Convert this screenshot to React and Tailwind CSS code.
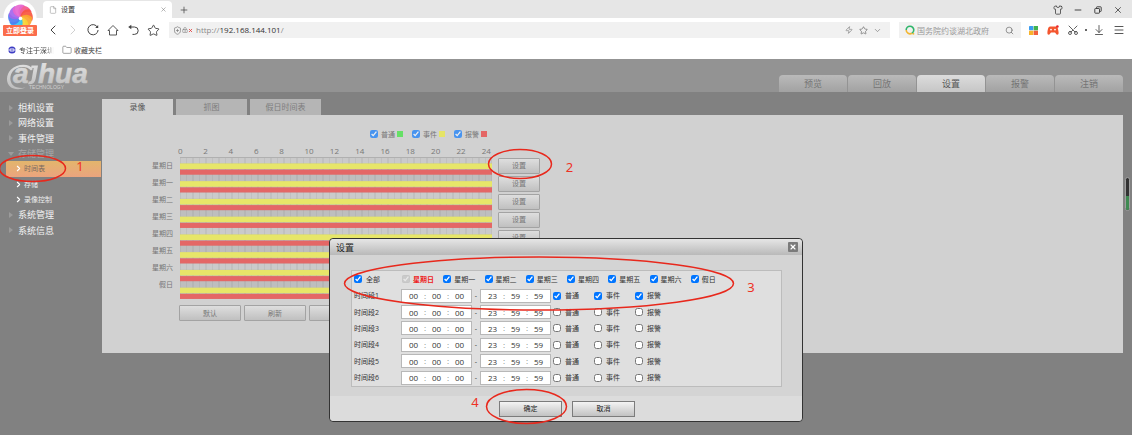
import React, { useState } from 'react';
import {
  ChevronLeft, ChevronRight, ChevronDown, Star, Zap, Search, Scissors,
  ArrowDownToLine, Menu, Shirt, Minus, X, Plus, Folder, File, ShieldPlus, LockKeyhole,
} from 'lucide-react';

const WEEK = ['星期日', '星期一', '星期二', '星期三', '星期四', '星期五', '星期六', '假日'];
const HOURS = [0, 2, 4, 6, 8, 10, 12, 14, 16, 18, 20, 22, 24];
const KINDS = ['普通', '事件', '报警'];
const PERIODS = [1, 2, 3, 4, 5, 6];

function IconButton({ label, className = 'w-5', children }) {
  return (
    <button type="button" aria-label={label} className={`flex h-4 shrink-0 items-center justify-center ${className}`}>
      {children}
    </button>
  );
}

function PinwheelLogo() {
  const petals = ['#f2568c', '#f9563f', '#fba52c', '#f9d234', '#35c3f5', '#4d7cf0', '#a266ee', '#e767d0'];
  return (
    <svg viewBox="0 0 34 36" className="h-9 w-[34px]" aria-hidden="true">
      <circle cx="17" cy="17" r="16.500" fill="#fff" />
      {petals.map((c, i) => (
        <path key={c} d="M17.500 17 C14.500 13.500 14.500 8.500 18 5.400 C23 5.200 27.500 8 28.600 12 C24 10.800 19.500 12.500 17.500 17Z" fill={c} transform={`rotate(${i * 45} 17.500 17)`} opacity="0.92" />
      ))}
      <circle cx="17.500" cy="18.500" r="1.800" fill="#fff" />
    </svg>
  );
}

function BrowserChrome() {
  return (
    <div className="relative bg-white text-[#444]">
      <div className="flex h-[18px] items-end bg-[#e6e6e6] pl-[43px]">
        <div className="flex h-[17px] w-[129px] items-center rounded-t bg-white pl-1.5 pr-1">
          <File size={8} strokeWidth={1.5} className="text-[#888]" />
          <span className="ml-1 flex-1 text-[7px] leading-none text-[#333]">设置</span>
          <IconButton label="关闭标签" className="w-2.5"><X size={7} strokeWidth={1.8} className="text-[#777]" /></IconButton>
        </div>
        <IconButton label="新标签" className="w-6"><Plus size={10} strokeWidth={1.8} /></IconButton>
        <div className="flex-1" />
        <IconButton label="皮肤"><Shirt size={10} strokeWidth={2} /></IconButton>
        <IconButton label="最小化"><Minus size={10} strokeWidth={2.4} /></IconButton>
        <IconButton label="还原">
          <svg viewBox="0 0 8 8" className="size-2" fill="none" stroke="currentColor" strokeWidth="1">
            <rect x="0.800" y="2.500" width="4.700" height="4.700" rx="0.600" />
            <path d="M2.500 2.200V1.400q0-.6.600-.6H6.600q.6 0 .6.600v3.500q0 .6-.6.600H5.800" />
          </svg>
        </IconButton>
        <IconButton label="关闭"><X size={10} strokeWidth={2} /></IconButton>
        <div className="w-1" />
      </div>
      <div className="flex h-6 items-center pl-[43px] pr-[3px]">
        <IconButton label="后退"><ChevronLeft size={16} strokeWidth={1.5} /></IconButton>
        <IconButton label="前进"><ChevronRight size={16} strokeWidth={1.4} className="text-[#ccc]" /></IconButton>
        <IconButton label="刷新页面">
          <svg viewBox="0 0 12 12" className="size-3" fill="none" stroke="currentColor" strokeWidth="1">
            <path d="M10.600 3.500A5.100 5.100 0 1 0 11.100 6" />
            <path d="M11.200 1v3H8.200z" fill="currentColor" stroke="none" />
          </svg>
        </IconButton>
        <IconButton label="主页">
          <svg viewBox="0 0 12 12" className="size-3" fill="none" stroke="currentColor" strokeWidth="0.900">
            <path d="M1 6.500 6 1.500l5 5H9.500V11h-7V6.500z" strokeLinejoin="round" />
          </svg>
        </IconButton>
        <IconButton label="撤销">
          <svg viewBox="0 0 12 12" className="size-3" fill="none" stroke="currentColor" strokeWidth="1">
            <path d="M3 3h4.500a3.700 3.700 0 0 1 0 7.400H5.500" />
            <path d="M1.200 3 4.300.8v4.400z" fill="currentColor" stroke="none" />
          </svg>
        </IconButton>
        <IconButton label="收藏"><Star size={13} strokeWidth={1.7} /></IconButton>
        <div className="ml-1.5 flex h-4 min-w-0 flex-1 items-center bg-[#f1f1f1] pl-1 pr-1.5">
          <ShieldPlus size={9} strokeWidth={1.8} className="text-[#777]" />
          <LockKeyhole size={6} strokeWidth={2.5} className="text-[#888]" />
          <X size={5} strokeWidth={4} className="text-[#e04040]" />
          <a href="http://192.168.144.101/" className="ml-[3px] flex-1 text-[8px] leading-none text-[#8a8a8a]">
            http://<span className="text-[#333]">192.168.144.101</span>/
          </a>
          <IconButton label="极速模式" className="w-3.5"><Zap size={8} strokeWidth={1.8} className="text-[#777]" /></IconButton>
          <IconButton label="收藏此页" className="w-3.5"><Star size={9} strokeWidth={1.8} className="text-[#666]" /></IconButton>
          <IconButton label="展开" className="w-3.5"><ChevronDown size={9} strokeWidth={1.8} className="text-[#777]" /></IconButton>
        </div>
        <div className="ml-[9px] flex h-4 w-[122px] items-center bg-[#f1f1f1] px-1.5">
          <svg viewBox="0 0 10 10" className="size-2.5" fill="none" strokeWidth="1.600" aria-hidden="true">
            <path d="M8.800 5A3.800 3.800 0 0 0 1.200 5" stroke="#2fb56a" />
            <path d="M1.200 5a3.800 3.800 0 0 0 5.700 3.300" stroke="#f2b632" />
            <path d="M8.800 5a3.800 3.800 0 0 1-1.900 3.300" stroke="#37b96d" />
            <path d="M7.600 8.800h1.600" stroke="#f2b632" />
          </svg>
          <input aria-label="搜索" placeholder="国务院约谈湖北政府" className="ml-0.5 h-3 min-w-0 flex-1 bg-transparent text-[8px] leading-none outline-none placeholder:text-[#999]" />
          <IconButton label="搜索按钮" className="w-3"><Search size={9} strokeWidth={1.8} className="text-[#666]" /></IconButton>
        </div>
        <IconButton label="应用" className="ml-0.5 w-5">
          <svg viewBox="0 0 10 10" className="size-[9px]">
            <rect width="4.800" height="4.800" rx="0.800" fill="#3b9cf0" /><rect x="5.200" width="4.800" height="4.800" fill="#41b24f" />
            <rect y="5.200" width="4.800" height="4.800" fill="#f8b32b" /><rect x="5.200" y="5.200" width="4.800" height="4.800" fill="#f2603c" />
          </svg>
        </IconButton>
        <IconButton label="游戏">
          <svg viewBox="0 0 12 11" className="h-[11px] w-3">
            <path d="M3 1.500h6c1.600 0 2.300 3 2.600 5.900.2 2.600-1.800 3-2.800 1L8 7.400H4L3.200 8.400c-1 2-3 1.600-2.800-1C.7 4.500 1.400 1.500 3 1.500z" fill="#f4562f" />
            <circle cx="4" cy="4.600" r="0.900" fill="#fff" /><circle cx="8" cy="4.600" r="0.900" fill="#fff" />
            <circle cx="10.400" cy="1.500" r="1.300" fill="#e8232a" />
          </svg>
        </IconButton>
        <IconButton label="截图"><Scissors size={12} strokeWidth={1.7} className="-rotate-90" /></IconButton>
        <IconButton label="截图选项" className="w-1.5"><span className="size-0.5 rounded-full bg-[#333]" /></IconButton>
        <IconButton label="下载"><ArrowDownToLine size={12} strokeWidth={1.7} /></IconButton>
        <IconButton label="菜单"><Menu size={12} strokeWidth={1.8} /></IconButton>
      </div>
      <div className="flex h-[17px] items-center pb-px pl-2 text-[7px] leading-none text-[#444]">
        <svg viewBox="0 0 8 8" className="size-2" aria-hidden="true">
          <circle cx="4" cy="4" r="3.600" fill="#3d3dc4" />
          <path d="M2.200 2.800h3.600v2.400H2.200zM0 4h8" fill="none" stroke="#fff" strokeWidth="0.700" />
        </svg>
        <a href="#shenzhen" className="ml-[3px] w-[35px] whitespace-nowrap [mask-image:linear-gradient(to_right,black_75%,transparent)]">专注于深圳</a>
        <Folder size={10} strokeWidth={1.6} className="ml-2 text-[#777]" />
        <a href="#bookmarks" className="ml-0.5">收藏夹栏</a>
      </div>
      <button type="button" className="absolute left-[3px] top-0 w-[34px]">
        <PinwheelLogo />
        <span className="absolute left-0 top-[25px] flex h-[11px] w-[34px] items-center justify-center rounded-[1px] bg-[#fb6d4b] text-[7px] font-bold leading-none text-white">立即登录</span>
      </button>
    </div>
  );
}

function DahuaLogo() {
  return (
    <svg viewBox="0 0 90 28" className="ml-[5px] h-7 w-[90px] self-start" role="img" aria-label="dahua technology">
      <defs>
        <linearGradient id="logo" gradientUnits="userSpaceOnUse" x1="0" y1="2" x2="0" y2="24">
          <stop offset="0" stopColor="#dedede" /><stop offset="1" stopColor="#c0c0c0" />
        </linearGradient>
      </defs>
      <path d="M28 6C24 0 12 .5 6 6.500 1 11.500.5 20 5.500 24c3.500 2.600 9 2.800 15 .8-6 .5-10-.2-12.500-2.600C4.500 18.500 4.500 12.500 8 8 12.500 3 21.500 2.500 26 7.500z" fill="url(#logo)" />
      <g fill="url(#logo)" stroke="url(#logo)" strokeWidth="0.500" fontFamily="'Liberation Sans', Arial, sans-serif" fontWeight="700" fontStyle="italic" fontSize="28">
        <text x="8" y="20">a</text>
        <text x="33" y="20">hua</text>
      </g>
      <path d="M26.500 2.500h6.500L30.600 16c-.8 4-3.200 5.800-7.600 5.200l.8-2.600c1.800 0 2.500-.6 2.900-2.400L28.700 5h-2.700z" fill="url(#logo)" />
      <text x="24" y="26" fill="#d0d0d0" fontFamily="'Liberation Sans', Arial, sans-serif" fontSize="5">TECHNOLOGY</text>
    </svg>
  );
}

function SiteHeader() {
  return (
    <header className="flex h-[33px] items-end justify-between bg-[#939393] pr-[9px] pt-1">
      <DahuaLogo />
      <nav className="flex gap-px">
        {['预览', '回放', '设置', '报警', '注销'].map((t) => (
          <a
            key={t}
            href={`#${t}`}
            className={`flex h-[17px] w-[68px] items-center justify-center rounded-t text-[9px] leading-none ${
              t === '设置'
                ? 'bg-linear-to-b from-[#dcdcdc] to-[#c6c6c6] text-[#555]'
                : 'bg-linear-to-b from-[#bababa] to-[#a2a2a2] text-[#757575]'
            }`}
          >
            {t}
          </a>
        ))}
      </nav>
    </header>
  );
}

function Sidebar() {
  const items = [
    { t: '相机设置' }, { t: '网络设置' }, { t: '事件管理' }, { t: '存储管理', open: true },
    { t: '时间表', sub: true, active: true }, { t: '存储', sub: true }, { t: '录像控制', sub: true },
    { t: '系统管理' }, { t: '系统信息' },
  ];
  return (
    <ul className="mt-px grid h-[138px] w-[102px] shrink-0 auto-rows-fr pl-1.5 pr-px leading-none">
      {items.map((it) => (
        <li key={it.t} className="flex">
          {it.sub ? (
            <a
              href={`#${it.t}`}
              className={`flex flex-1 items-center pl-2 text-[7px] ${
                it.active ? 'bg-linear-to-b from-[#e3b56c] to-[#eba47e] text-[#776a60]' : 'text-[#eee]'
              }`}
            >
              <ChevronRight size={9} strokeWidth={3} className="mr-px text-white" />
              {it.t}
            </a>
          ) : (
            <a href={`#${it.t}`} className={`flex flex-1 items-center pl-0.5 text-[9px] ${it.open ? 'text-[#a8a8a8]' : 'text-[#f3f3f3]'}`}>
              <svg viewBox="0 0 6 6" className="mr-1 size-1.5" aria-hidden="true">
                <path d={it.open ? 'M0 1h6L3 5z' : 'M1 0v6l4-3z'} fill="#9b9b9b" />
              </svg>
              {it.t}
            </a>
          )}
        </li>
      ))}
    </ul>
  );
}

function ScheduleChart() {
  const step = 142 / 8;
  return (
    <svg viewBox="0 0 312 142" className="h-[142px] w-[312px]" role="img" aria-label="录像时间表">
      <rect width="312" height="142" fill="#b9b9b9" />
      {WEEK.map((d, i) => (
        <rect key={d} x="0" y={i * step} width="312" height="6.200" fill={i % 2 ? '#bebebe' : '#cacaca'} />
      ))}
      {Array.from({ length: 49 }, (_, i) => (
        <path key={i} d={`M${i * 6.5} 0v142`} stroke="#777" strokeOpacity={i % 2 ? 0.15 : 0.3} strokeWidth="0.800" />
      ))}
      {WEEK.map((d, i) => (
        <g key={d} fillOpacity="0.96">
          <rect x="0" y={i * step + 6.4} width="312" height="5.600" fill="#e9e866" />
          <rect x="0" y={i * step + 12.6} width="312" height="5.100" fill="#e66463" />
        </g>
      ))}
      <path d="M0 .5h312" stroke="#b0b0b0" />
    </svg>
  );
}

const grayButton = 'flex items-center justify-center rounded-[1px] border border-[#a3a3a3] bg-linear-to-b from-[#dedede] to-[#c0c0c0] text-[7px] leading-none text-[#777]';

function SchedulePage() {
  const colors = ['bg-[#66e066]', 'bg-[#e5e466]', 'bg-[#e46665]'];
  return (
    <main className="min-w-0 flex-1 pr-[9px]">
      <nav className="flex gap-[3px]">
        {['录像', '抓图', '假日时间表'].map((t, i) => (
          <a
            key={t}
            href={`#${t}`}
            className={`flex h-4 w-[71px] items-center justify-center text-[8px] leading-none ${
              i === 0 ? 'bg-[#d1d1d1] text-[#555]' : 'bg-[#b5b5b5] text-[#7d7d7d]'
            }`}
          >
            {t}
          </a>
        ))}
      </nav>
      <section className="bg-[#d1d1d1] pb-8 pt-3.5 text-[7px] leading-none text-[#777]">
        <div className="ml-[268px] flex h-2.5">
          {KINDS.map((k, i) => (
            <label key={k} className="flex w-[42px] items-center">
              <input type="checkbox" defaultChecked className="size-2 opacity-65" />
              <span className="ml-[3px]">{k}</span>
              <i className={`ml-0.5 size-1.5 ${colors[i]}`} />
            </label>
          ))}
        </div>
        <div className="ml-[76px] mt-[5px] grid h-[13px] w-[329px] grid-cols-[repeat(13,1fr)] items-center text-[8px]">
          {HOURS.map((h) => <span key={h}>{h}</span>)}
        </div>
        <div className="flex">
          <div className="mr-[7px] w-[71px] text-right">
            {WEEK.map((d) => <div key={d} className="flex h-[17px] items-center justify-end">{d}</div>)}
          </div>
          <ScheduleChart />
          <div className="ml-1.5 grid auto-rows-fr gap-0.5 pt-px">
            {WEEK.map((d) => (
              <button key={d} type="button" aria-label={`设置 ${d}`} className={`w-[42px] ${grayButton}`}>设置</button>
            ))}
          </div>
        </div>
        <div className="ml-[77px] mt-1.5 flex gap-[3px]">
          {['默认', '刷新', '确定'].map((b) => (
            <button key={b} type="button" className={`h-4 w-[62px] ${grayButton}`}>{b}</button>
          ))}
        </div>
      </section>
    </main>
  );
}

function TimeBox({ name, value }) {
  return (
    <div className="flex h-3.5 w-[71px] items-center border border-[#b8b8b8] bg-white pl-px text-[8px] leading-none text-[#333]">
      {value.map((v, i) => (
        <React.Fragment key={i}>
          {i > 0 && <span className="w-0.5 text-center text-[#888]">:</span>}
          <input aria-label={`${name} ${i + 1}`} defaultValue={v} className="h-3 w-[21px] bg-transparent text-center outline-none" />
        </React.Fragment>
      ))}
    </div>
  );
}

function SettingsDialog({ onClose }) {
  const dialogButton = 'flex h-4 w-[63px] items-center justify-center border border-[#7c7c7c] bg-linear-to-b from-[#f4f4f4] to-[#c2c2c2] text-[7px] leading-none text-[#222]';
  return (
    <div className="absolute inset-x-0 top-[238px] flex justify-center">
      <div role="dialog" aria-label="设置" className="w-[474px] rounded-sm border border-[#333] bg-[#d4d4d4] text-[7px] leading-none text-[#333]">
        <div className="flex h-4 items-center justify-between rounded-t-sm bg-linear-to-b from-[#e6e6e6] to-[#b9b9b9] pl-1.5 pr-1">
          <h2 className="text-[9px] text-[#222]">设置</h2>
          <button type="button" aria-label="关闭对话框" onClick={onClose} className="flex size-2.5 items-center justify-center rounded-[1px] bg-[#7b7b7b] text-white">
            <X size={8} strokeWidth={3.5} />
          </button>
        </div>
        <div className="pb-[9px] pl-[21px] pr-5 pt-[15px]">
          <div className="grid h-[117px] auto-rows-fr border border-[#bcbcbc] bg-[#dfdfdf] pl-0.5">
            <div className="flex items-center">
              <label className="flex w-12 items-center gap-1">
                <input type="checkbox" defaultChecked className="size-2" />全部
              </label>
              <div className="grid w-[330px] grid-cols-8">
                {WEEK.map((d, i) => (
                  <label key={d} className={`flex items-center gap-[3px] whitespace-nowrap ${i === 0 ? 'font-bold text-[#ee2222]' : ''}`}>
                    <input type="checkbox" defaultChecked disabled={i === 0} className="size-2 shrink-0" />{d}
                  </label>
                ))}
              </div>
            </div>
            {PERIODS.map((p) => (
              <div key={p} className="flex items-center">
                <span className="w-[47px]">时间段{p}</span>
                <TimeBox name={`时间段${p} 开始`} value={['00', '00', '00']} />
                <span className="w-2 text-center">-</span>
                <TimeBox name={`时间段${p} 结束`} value={['23', '59', '59']} />
                <div className="ml-0.5 flex">
                  {KINDS.map((k) => (
                    <label key={k} className="flex w-[41px] items-center gap-1">
                      <input type="checkbox" defaultChecked={p === 1} className="size-2" />{k}
                    </label>
                  ))}
                </div>
              </div>
            ))}
          </div>
        </div>
        <div className="flex h-[25px] items-center justify-center gap-2.5 rounded-b-sm bg-[#dcdcdc] pl-0.5">
          <button type="button" className={dialogButton}>确定</button>
          <button type="button" onClick={onClose} className={dialogButton}>取消</button>
        </div>
      </div>
    </div>
  );
}

function Annotations() {
  return (
    <svg className="pointer-events-none absolute left-0 top-0 h-[435px] w-[1132px]" viewBox="0 0 1132 435">
      <g fill="none" stroke="#e8281c" strokeWidth="1.500">
        <ellipse cx="32.500" cy="168.500" rx="33" ry="13" />
        <ellipse cx="520" cy="164" rx="31.500" ry="14.500" />
        <ellipse cx="539" cy="283.500" rx="194.500" ry="26.500" />
        <ellipse cx="526.500" cy="406.500" rx="40" ry="17" />
      </g>
      <g fill="#ee3124" fontSize="13" textAnchor="middle" fontFamily="'Noto Sans', sans-serif">
        <text x="80" y="171">1</text>
        <text x="569.500" y="172">2</text>
        <text x="751" y="292">3</text>
        <text x="475" y="407">4</text>
      </g>
    </svg>
  );
}

export default function App() {
  const [open, setOpen] = useState(true);
  return (
    <div className="relative flex min-h-screen flex-col bg-[#818181] font-['Open_Sans','Noto_Sans_CJK_SC',sans-serif]">
      <BrowserChrome />
      <SiteHeader />
      <div className="flex pt-[7px]">
        <Sidebar />
        <SchedulePage />
      </div>
      <div className="absolute right-0.5 top-[177px] flex h-[34px] w-[5px] flex-col overflow-hidden rounded-full border border-[#a0a0a0] bg-[#333]">
        <div className="mt-auto h-[14px] bg-[#3f8a52]" />
      </div>
      {open && <SettingsDialog onClose={() => setOpen(false)} />}
      <Annotations />
    </div>
  );
}
